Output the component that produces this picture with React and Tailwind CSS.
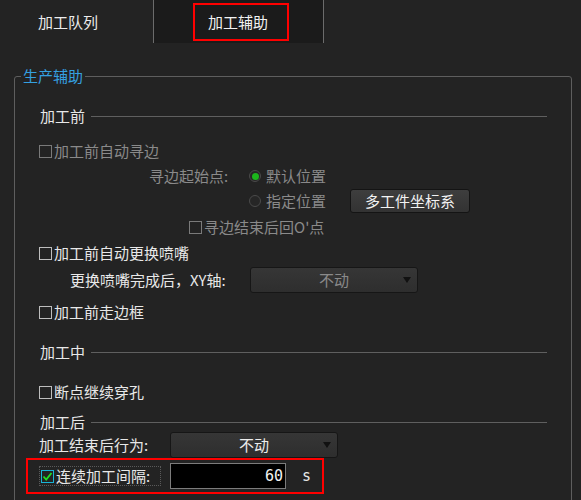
import React from "react";

const font = { fontFamily: '"Noto Sans CJK SC", "Noto Sans", sans-serif' };

const Box = ({ disabled }) => (
  <span
    className={`inline-block w-[13px] h-[13px] border ${
      disabled ? "border-[#7a7a7a]" : "border-[#bdbdbd]"
    } mr-[2px] shrink-0`}
  />
);

const Check = ({ label, disabled, className = "" }) => (
  <div className={`flex items-center h-[20px] ${className}`}>
    <Box disabled={disabled} />
    <span className={disabled ? "text-[#8a8a8a]" : "text-[#e8e8e8]"}>{label}</span>
  </div>
);

const Section = ({ title, className = "" }) => (
  <div className={`flex items-center h-[20px] ml-[25px] mr-[24px] ${className}`}>
    <span className="text-[#e8e8e8]">{title}</span>
    <div className="flex-1 h-px bg-[#5f5f5f] ml-[6px]" />
  </div>
);

const Radio = ({ checked }) => (
  <span className="w-[12px] h-[12px] rounded-full border border-[#4a4a4a] bg-[#262626] flex items-center justify-center shrink-0">
    {checked && <span className="w-[7px] h-[7px] rounded-full bg-[#1cb51c]" />}
  </span>
);

const Select = ({ value, disabled }) => (
  <div className="w-[168px] h-[26px] rounded-[3px] border border-[#161616] bg-gradient-to-b from-[#363636] to-[#2e2e2e] relative flex items-center justify-center">
    <span className={disabled ? "text-[#8a8a8a]" : "text-[#ececec]"}>{value}</span>
    <svg className="absolute right-[6px] top-[9px]" width="8" height="6" viewBox="0 0 8 6">
      <path d="M0 0 H8 L4 6 Z" fill="#111" />
    </svg>
  </div>
);

export default function App() {
  return (
    <div className="w-[581px] h-[500px] overflow-hidden bg-[#232323] text-[15px] leading-[20px]" style={font}>
      {/* tabs */}
      <div className="flex h-[43px]">
        <div className="w-[153px] flex items-center pl-[38px] text-[#ececec]">加工队列</div>
        <div className="w-[171px] border-x border-[#6b6b6b] bg-[#1b1b1b] pl-[39px] pt-[3px]">
          <div className="w-[96px] h-[38px] border-2 border-[#ff0000] flex items-center pl-[13px] text-[#f2f2f2]">
            加工辅助
          </div>
        </div>
      </div>

      {/* group */}
      <fieldset className="mt-[23px] ml-[14px] mr-[9px] border border-[#5e5e5e] rounded-[3px] h-[460px]">
        <legend className="ml-[6px] px-[2px] text-[#35a0e0] leading-[20px]">生产辅助</legend>

        <Section title="加工前" className="mt-[20px]" />
        <Check label="加工前自动寻边" disabled className="ml-[24px] mt-[15px]" />

        <div className="flex items-center h-[24px] mt-[3px] ml-[134px]">
          <span className="w-[100px] text-[#8a8a8a]">寻边起始点:</span>
          <Radio checked />
          <span className="ml-[5px] text-[#8a8a8a]">默认位置</span>
        </div>
        <div className="flex items-center h-[24px] mt-[1px] ml-[234px]">
          <Radio />
          <span className="ml-[5px] text-[#8a8a8a]">指定位置</span>
          <button className="ml-[24px] w-[120px] h-[24px] rounded-[3px] border border-[#141414] bg-gradient-to-b from-[#3e3e3e] to-[#333333] text-[#f2f2f2]">
            多工件坐标系
          </button>
        </div>
        <Check label="寻边结束后回O'点" disabled className="ml-[174px] mt-[4px]" />

        <Check label="加工前自动更换喷嘴" className="ml-[24px] mt-[6px]" />
        <div className="flex items-center h-[26px] mt-[4px] ml-[55px]">
          <span className="w-[180px] text-[#e8e8e8]">更换喷嘴完成后，XY轴:</span>
          <Select value="不动" disabled />
        </div>
        <Check label="加工前走边框" className="ml-[24px] mt-[9px]" />

        <Section title="加工中" className="mt-[20px]" />
        <Check label="断点继续穿孔" className="ml-[24px] mt-[20px]" />

        <Section title="加工后" className="mt-[10px]" />
        <div className="flex items-center h-[26px] ml-[24px]">
          <span className="w-[131px] text-[#e8e8e8]">加工结束后行为:</span>
          <Select value="不动" />
        </div>

        <div className="ml-[11px] w-[298px] h-[36px] border-2 border-[#ff0000] flex items-center pl-[11px]">
          <div className="flex items-center h-[20px] w-[122px] border border-dotted border-[#5a5a5a]">
            <span className="ml-[1px] w-[13px] h-[13px] border border-[#19b4d6] flex items-center justify-center shrink-0">
              <svg width="11" height="11" viewBox="0 0 11 11">
                <path d="M1.5 5.5 L4.2 8.5 L9.5 2" stroke="#22e022" strokeWidth="1.8" fill="none" />
              </svg>
            </span>
            <span className="ml-[2px] text-[#e8e8e8]">连续加工间隔:</span>
          </div>
          <div
            className="ml-[9px] w-[116px] h-[26px] bg-black border border-[#7c7c7c] flex items-center justify-end pr-[2px] text-[#f2f2f2]"
            style={{ fontFamily: '"DejaVu Sans Mono", monospace' }}
          >
            60
          </div>
          <span className="ml-[16px] text-[#e8e8e8]" style={{ fontFamily: '"DejaVu Sans Mono", monospace' }}>
            s
          </span>
        </div>
      </fieldset>
    </div>
  );
}
